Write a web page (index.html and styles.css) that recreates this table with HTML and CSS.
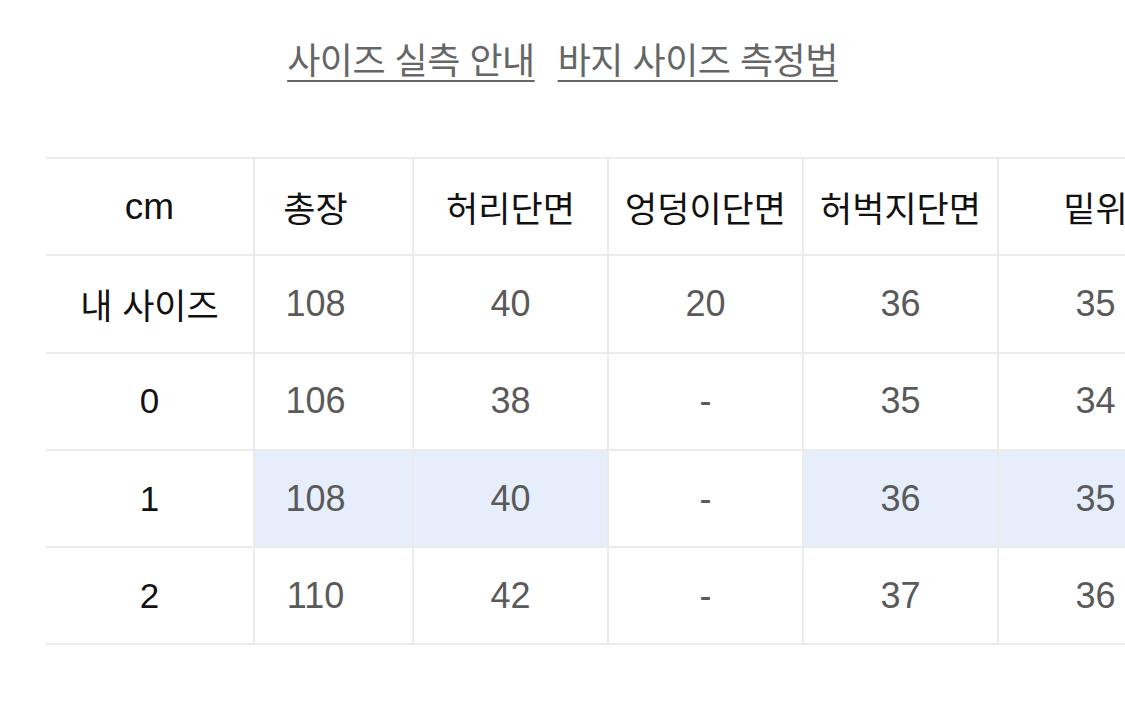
FILE: index.html
```html
<!DOCTYPE html>
<html lang="ko">
<head>
<meta charset="utf-8">
<link rel="stylesheet" href="styles.css">
</head>
<body>
<nav class="links">
  <a class="link" href="#">사이즈 실측 안내</a>
  <a class="link" href="#">바지 사이즈 측정법</a>
</nav>
<div class="sheet">
  <div class="fixed-col">
    <div class="cell head unit">cm</div>
    <div class="cell head">내 사이즈</div>
    <div class="cell head">0</div>
    <div class="cell head">1</div>
    <div class="cell head last">2</div>
  </div>
  <div class="scroll">
    <div class="grid">
      <div class="cell head">총장</div>
      <div class="cell head">허리단면</div>
      <div class="cell head">엉덩이단면</div>
      <div class="cell head">허벅지단면</div>
      <div class="cell head">밑위</div>
      <div class="cell head">밑단단면</div>

      <div class="cell">108</div>
      <div class="cell">40</div>
      <div class="cell">20</div>
      <div class="cell">36</div>
      <div class="cell">35</div>
      <div class="cell">20</div>

      <div class="cell">106</div>
      <div class="cell">38</div>
      <div class="cell">-</div>
      <div class="cell">35</div>
      <div class="cell">34</div>
      <div class="cell">-</div>

      <div class="cell hl">108</div>
      <div class="cell hl">40</div>
      <div class="cell">-</div>
      <div class="cell hl">36</div>
      <div class="cell hl">35</div>
      <div class="cell">-</div>

      <div class="cell last">110</div>
      <div class="cell last">42</div>
      <div class="cell last">-</div>
      <div class="cell last">37</div>
      <div class="cell last">36</div>
      <div class="cell last">-</div>
    </div>
  </div>
</div>
</body>
</html>
```

FILE: styles.css
```css
html, body {
  margin: 0;
  padding: 0;
  background: #ffffff;
}
body {
  font-family: "Liberation Sans", "Noto Sans CJK KR", sans-serif;
  width: 1125px;
  height: 702px;
  overflow: hidden;
}
.links {
  display: flex;
  justify-content: center;
  gap: 23px;
  padding-top: 32px;
  height: 157px;
  box-sizing: border-box;
}
.link {
  font-family: "Noto Sans CJK KR", sans-serif;
  font-size: 36px;
  line-height: 52px;
  height: 52px;
  color: #666666;
  text-decoration: underline;
  text-decoration-thickness: 2px;
  text-underline-offset: 6px;
  letter-spacing: -0.5px;
}
.sheet {
  display: flex;
  margin-left: 46px;
}
.fixed-col {
  width: 207px;
  flex: none;
  border-right: 2px solid #ebebeb;
}
.scroll {
  flex: 1;
  overflow: hidden;
}
.grid {
  display: grid;
  grid-template-columns: repeat(6, 195px);
  margin-left: -36px;
}
.cell {
  height: 95.3px;
  border-top: 2px solid #ebebeb;
  display: flex;
  align-items: center;
  justify-content: center;
  font-size: 36px;
  color: #5a5a5a;
}
.grid .cell {
  border-right: 2px solid #ebebeb;
}
.cell.head {
  color: #111111;
  font-size: 35px;
  font-weight: 400;
}
.cell.unit {
  font-size: 37px;
}
.cell.last {
  border-bottom: 2px solid #ebebeb;
}
.cell.hl {
  background: #e7eefb;
}
```
